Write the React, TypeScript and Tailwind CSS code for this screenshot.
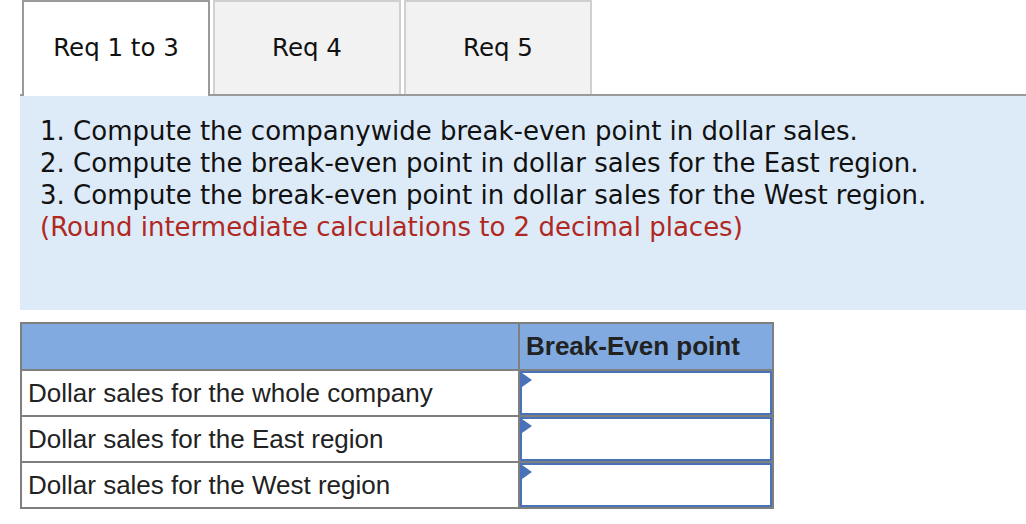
import React from "react";

const verdana = { fontFamily: '"DejaVu Sans", Verdana, sans-serif' };
const arial = { fontFamily: '"Liberation Sans", Arial, sans-serif' };

function Tab({ label, active }: { label: string; active?: boolean }) {
  return (
    <div
      className={
        "w-[188px] h-[96px] flex items-center justify-center text-[24.5px] text-[#111] " +
        (active
          ? "bg-white border-2 border-b-0 border-[#9a9a9a]"
          : "bg-[#f2f2f2] border-2 border-[#d0d0d0] border-b-0")
      }
      style={verdana}
    >
      <span className="-mt-[2px]">{label}</span>
    </div>
  );
}

function InputCell() {
  return (
    <div className="w-[254px] border-l-2 border-[#7f7f7f] flex">
      <div className="relative flex-1 border-2 border-[#4a72b8] bg-white">
        <svg className="absolute left-0 top-0" width="10" height="16" viewBox="0 0 10 16">
          <polygon points="0,0 10,7 0,14" fill="#4a72b8" />
        </svg>
      </div>
    </div>
  );
}

function Row({ label }: { label: string }) {
  return (
    <div className="flex h-[46px] border-t-2 border-[#7f7f7f]">
      <div className="flex-1 flex items-center pl-[6px] text-[26px] text-[#222]" style={arial}>
        <span className="mt-[1px]">{label}</span>
      </div>
      <InputCell />
    </div>
  );
}

export default function App() {
  return (
    <div className="w-[1026px] h-[524px] bg-white overflow-hidden">
      <div className="flex gap-[3px] pl-[22px]">
        <Tab label="Req 1 to 3" active />
        <Tab label="Req 4" />
        <Tab label="Req 5" />
      </div>
      <div className="ml-[20px] -mt-[2px] relative">
        <div className="h-[2px] flex">
          <div className="w-[2px] bg-[#9a9a9a]" />
          <div className="w-[186px]" />
          <div className="flex-1 bg-[#9a9a9a]" />
        </div>
        <div className="bg-[#ddebf8] h-[214px] pt-[19px] pl-[20px] text-[26px] leading-[32px] text-[#111]" style={verdana}>
          <div>1. Compute the companywide break-even point in dollar sales.</div>
          <div>2. Compute the break-even point in dollar sales for the East region.</div>
          <div>3. Compute the break-even point in dollar sales for the West region.</div>
          <div className="text-[#b0281f]">(Round intermediate calculations to 2 decimal places)</div>
        </div>
      </div>
      <div className="ml-[20px] mt-[12px] w-[754px] border-2 border-[#7f7f7f]">
        <div className="flex h-[45px] bg-[#81abe0]">
          <div className="flex-1" />
          <div className="w-[254px] border-l-2 border-[#7f7f7f] flex items-center pl-[6px] text-[26px] font-bold text-[#222]" style={arial}>
            Break-Even point
          </div>
        </div>
        <Row label="Dollar sales for the whole company" />
        <Row label="Dollar sales for the East region" />
        <Row label="Dollar sales for the West region" />
      </div>
    </div>
  );
}
